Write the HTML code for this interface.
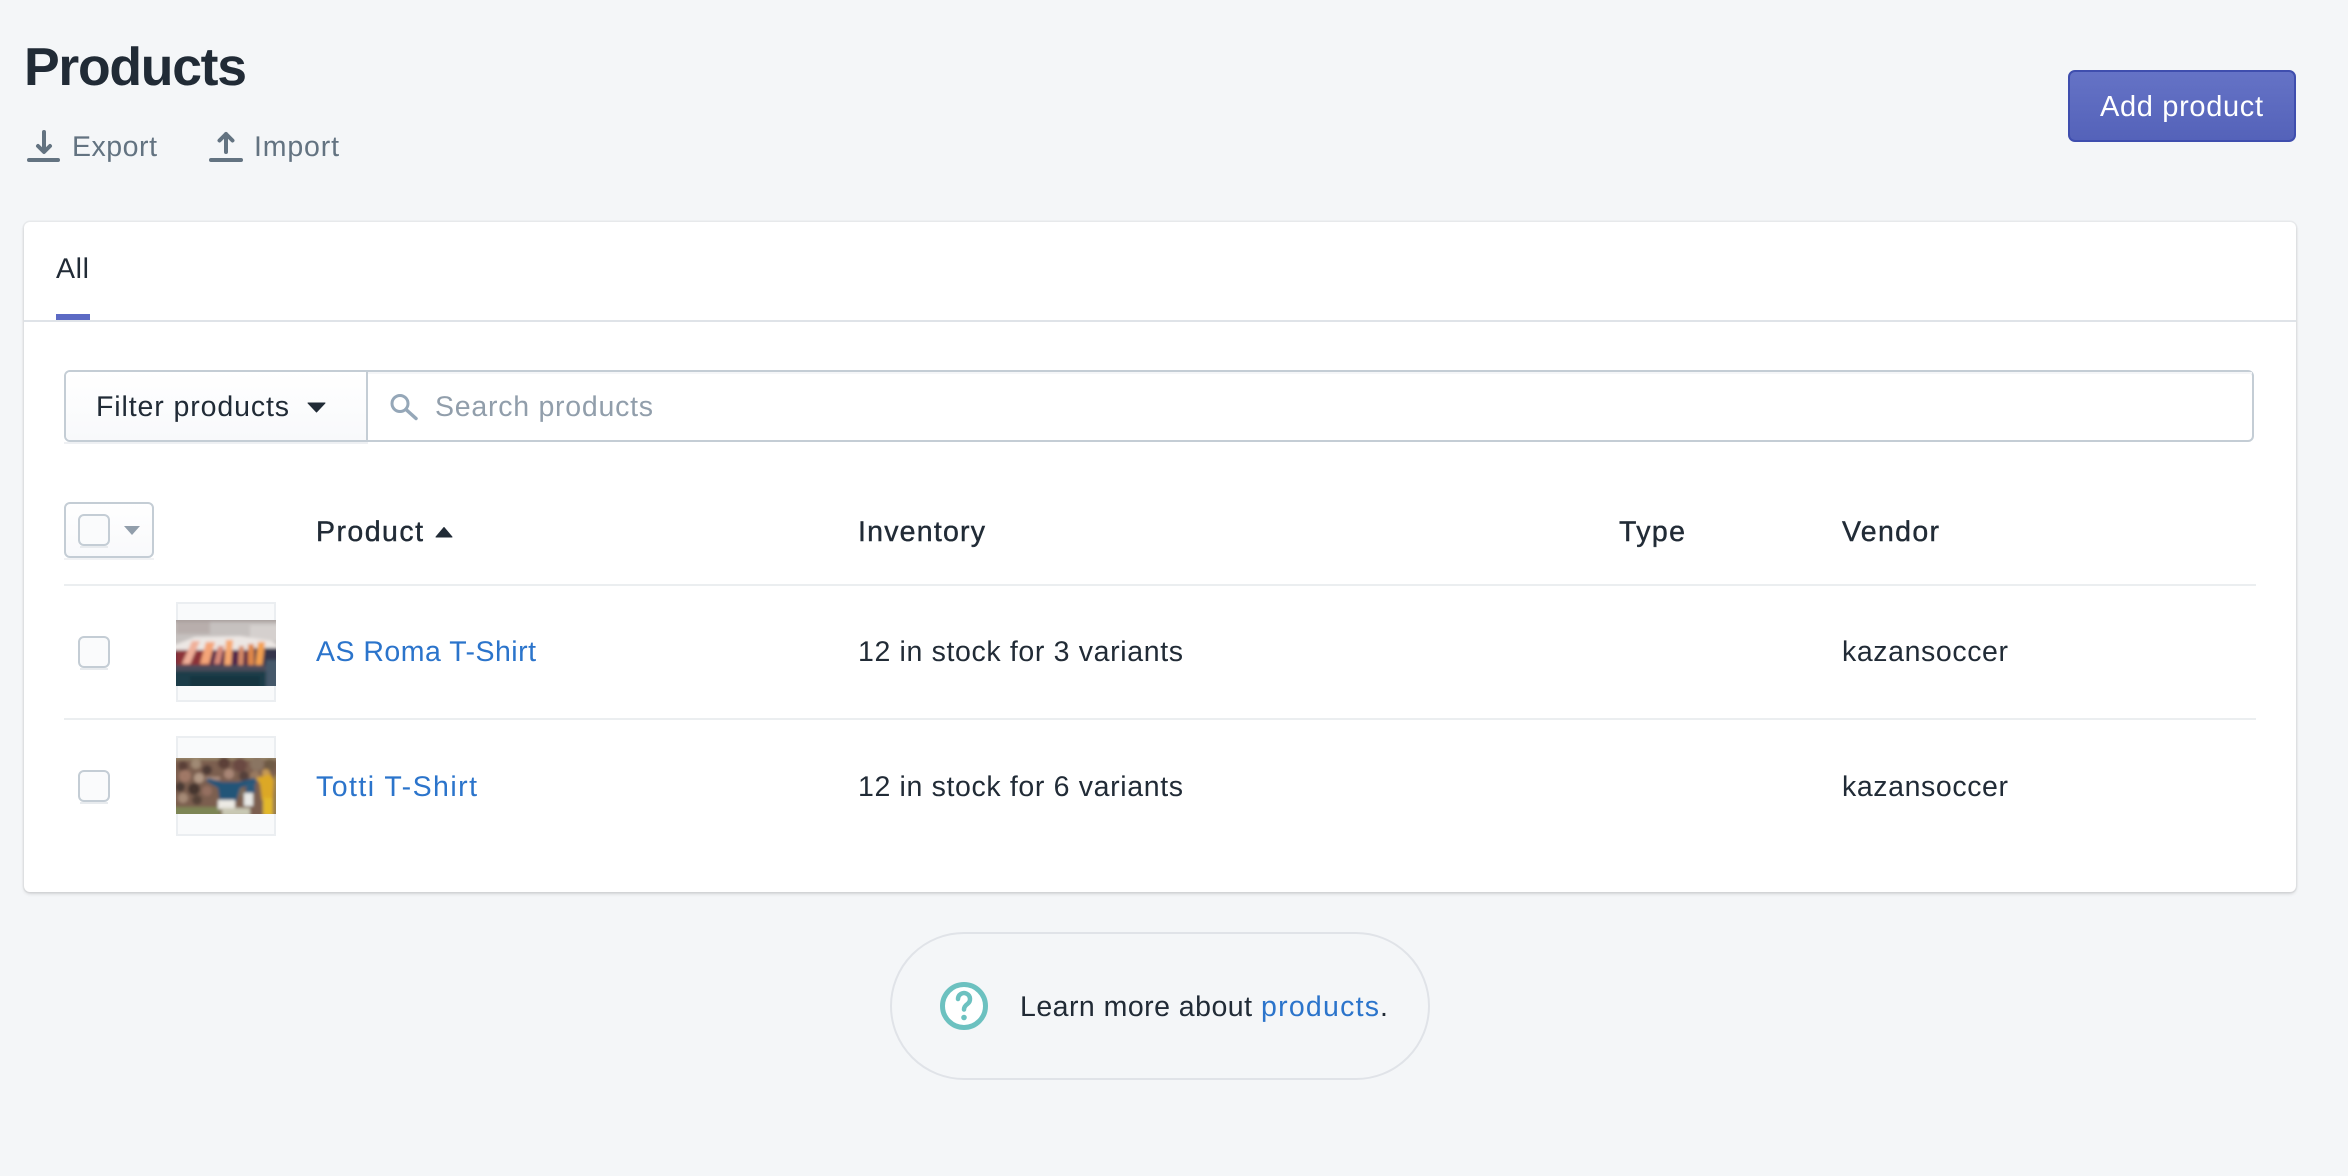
<!DOCTYPE html>
<html lang="en"><head><meta charset="utf-8"><title>Products</title>
<style>
html,body{margin:0;padding:0;width:2348px;height:1176px;overflow:hidden;background:#f4f6f8}
.card{position:absolute;left:24px;top:222px;width:2272px;height:670px;background:#fff;border-radius:6px;box-shadow:0 0 0 1.5px rgba(63,63,68,.06),0 2px 3px rgba(63,63,68,.16)}
svg{position:absolute;left:0;top:0}
text{font-family:"Liberation Sans",sans-serif;font-size:28.5px;fill:#212b36;text-rendering:geometricPrecision}
</style></head>
<body>
<div class="card"></div>
<svg width="2348" height="1176" viewBox="0 0 2348 1176" xmlns="http://www.w3.org/2000/svg">
<defs>
<linearGradient id="b" x1="0" y1="0" x2="0" y2="1"><stop offset="0" stop-color="#6573c6"/><stop offset="1" stop-color="#5462b9"/></linearGradient>
<linearGradient id="f" x1="0" y1="0" x2="0" y2="1"><stop offset="0" stop-color="#fff"/><stop offset="1" stop-color="#f8f9fb"/></linearGradient>
<filter id="bl1" x="-5%" y="-5%" width="110%" height="110%"><feGaussianBlur stdDeviation="1.6"/></filter>
<filter id="bl2" x="-5%" y="-5%" width="110%" height="110%"><feGaussianBlur stdDeviation="1.7"/></filter>
<clipPath id="c1"><rect x="176" y="620" width="100" height="66"/></clipPath>
<clipPath id="c2"><rect x="176" y="758" width="100" height="56"/></clipPath>
</defs>

<!-- header -->
<text x="24" y="85" textLength="223" lengthAdjust="spacing" style="font-size:53.5px;font-weight:700">Products</text>
<g fill="none" stroke="#637381" stroke-width="4" stroke-linecap="round" stroke-linejoin="round">
<path d="M44 132V151M38 146l6 6 6-6"/><path d="M29 160H58"/>
<path d="M226 152V134M219.500 140.500l6.500-6.500 6.500 6.500"/><path d="M211 160H241"/>
</g>
<text x="72" y="156" textLength="85" lengthAdjust="spacing" style="fill:#637381">Export</text>
<text x="254" y="156" textLength="85" lengthAdjust="spacing" style="fill:#637381">Import</text>

<!-- button -->
<rect x="2069" y="71" width="226" height="70" rx="6" fill="url(#b)" stroke="#3f4eae" stroke-width="2"/>
<text x="2100" y="116" textLength="163" lengthAdjust="spacing" style="fill:#fff;font-size:29px">Add product</text>

<!-- tabs -->
<text x="56" y="278" textLength="33" lengthAdjust="spacing">All</text>
<rect x="56" y="314" width="34" height="6" fill="#5c6ac4"/>
<rect x="24" y="320" width="2272" height="2" fill="#dfe3e8"/>

<!-- filter + search -->
<rect x="64" y="442" width="304" height="2" fill="#eef0f3"/>
<rect x="65" y="371" width="2188" height="70" rx="5" fill="#fff" stroke="#c4cdd5" stroke-width="2"/>
<path d="M70 372H366V440H70a4 4 0 0 1-4-4V376a4 4 0 0 1 4-4z" fill="url(#f)"/>
<rect x="366" y="371" width="2" height="70" fill="#c4cdd5"/>
<rect x="368" y="372" width="1884" height="2" fill="#f5f6f8"/>
<text x="96" y="416" textLength="193" lengthAdjust="spacing">Filter products</text>
<path d="M308 403H325L316.500 412Z" fill="#212b36" stroke="#212b36" stroke-width="1" stroke-linejoin="round"/>
<circle cx="400" cy="403.500" r="8" fill="none" stroke="#95a7b8" stroke-width="3"/>
<path d="M406 409.500L416 418.500" stroke="#95a7b8" stroke-width="3.500" stroke-linecap="round"/>
<text x="435" y="416" textLength="218" lengthAdjust="spacing" style="fill:#919eab">Search products</text>

<!-- table head -->
<rect x="65" y="503" width="88" height="54" rx="5" fill="url(#f)" stroke="#c4cdd5" stroke-width="2"/>
<rect x="64" y="558" width="90" height="2" fill="#f1f2f4"/>
<rect x="79" y="515" width="30" height="30" rx="5" fill="#fafbfc" stroke="#c4cdd5" stroke-width="2"/>
<rect x="80" y="546" width="28" height="2" fill="#e8ebee"/>
<path d="M124 526H140L132 535Z" fill="#919eab"/>
<text x="316" y="541" textLength="107" lengthAdjust="spacing" style="stroke:#212b36;stroke-width:.4">Product</text>
<path d="M436 537H452L444 527.500Z" fill="#212b36" stroke="#212b36" stroke-width="1" stroke-linejoin="round"/>
<text x="858" y="541" textLength="127" lengthAdjust="spacing" style="stroke:#212b36;stroke-width:.4">Inventory</text>
<text x="1619" y="541" textLength="66" lengthAdjust="spacing" style="stroke:#212b36;stroke-width:.4">Type</text>
<text x="1842" y="541" textLength="97" lengthAdjust="spacing" style="stroke:#212b36;stroke-width:.4">Vendor</text>
<rect x="64" y="584" width="2192" height="2" fill="#ebeef0"/>
<rect x="64" y="718" width="2192" height="2" fill="#ebeef0"/>

<!-- row 1 -->
<rect x="79" y="637" width="30" height="30" rx="5" fill="#fafbfc" stroke="#c4cdd5" stroke-width="2"/>
<rect x="80" y="668" width="28" height="2" fill="#e8ebee"/>
<rect x="177" y="603" width="98" height="98" fill="#f9fafb" stroke="#ebeef1" stroke-width="2"/>
<g clip-path="url(#c1)"><g filter="url(#bl1)">
<rect x="170" y="612" width="112" height="38" fill="#c6c1bf"/>
<rect x="170" y="612" width="112" height="10" fill="#a99f9d"/>
<rect x="176" y="622" width="34" height="12" fill="#b8aeac"/>
<rect x="250" y="625" width="30" height="16" fill="#d5d0ce"/>
<path d="M172 646L195 637 240 636 272 641 280 648 170 654Z" fill="#ece7e4"/>
<rect x="170" y="650" width="112" height="20" fill="#5a2c44"/>
<rect x="176" y="650" width="34" height="16" fill="#8c3038"/>
<rect x="248" y="648" width="34" height="22" fill="#35364c"/>
<rect x="212" y="650" width="30" height="16" fill="#4e2448"/>
<path d="M192 641L200 641 190 664 182 664Z" fill="#f0b09a"/>
<path d="M206 642L215 642 209 664 200 664Z" fill="#f4a478"/>
<path d="M218 646L224 646 220 664 214 664Z" fill="#d88a78"/>
<path d="M226 640L233 640 231 668 224 668Z" fill="#f6a870"/>
<path d="M239 646L244 646 243 668 238 668Z" fill="#d88c68"/>
<path d="M248 644L254 644 254 670 248 670Z" fill="#e08848"/>
<path d="M258 642L265 642 262 668 255 668Z" fill="#f4a050"/>
<rect x="170" y="665" width="112" height="7" fill="#4c4c5a"/>
<rect x="170" y="671" width="112" height="20" fill="#1e3d48"/>
<rect x="190" y="676" width="70" height="12" fill="#193540"/>
<rect x="266" y="660" width="16" height="30" fill="#44586a"/>
</g></g>

<text x="316" y="661" textLength="220" lengthAdjust="spacing" style="fill:#2b74cb">AS Roma T-Shirt</text>
<text x="858" y="661" textLength="325" lengthAdjust="spacing">12 in stock for 3 variants</text>
<text x="1842" y="661" textLength="166" lengthAdjust="spacing">kazansoccer</text>

<!-- row 2 -->
<rect x="79" y="771" width="30" height="30" rx="5" fill="#fafbfc" stroke="#c4cdd5" stroke-width="2"/>
<rect x="80" y="802" width="28" height="2" fill="#e8ebee"/>
<rect x="177" y="737" width="98" height="98" fill="#f9fafb" stroke="#ebeef1" stroke-width="2"/>
<g clip-path="url(#c2)"><g filter="url(#bl2)">
<rect x="170" y="752" width="112" height="66" fill="#7c5f50"/>
<rect x="170" y="752" width="112" height="8" fill="#978468"/>
<circle cx="183" cy="766" r="5" fill="#5a3f38"/>
<circle cx="196" cy="764" r="5" fill="#a08a74"/>
<circle cx="207" cy="770" r="5" fill="#4e3a36"/>
<circle cx="185" cy="776" r="6" fill="#a07866"/>
<circle cx="199" cy="778" r="5" fill="#b39a86"/>
<circle cx="180" cy="787" r="5" fill="#4a3a34"/>
<circle cx="194" cy="789" r="6" fill="#44362f"/>
<circle cx="207" cy="791" r="5" fill="#957060"/>
<circle cx="183" cy="798" r="5" fill="#a58a76"/>
<circle cx="197" cy="800" r="5" fill="#544238"/>
<rect x="170" y="807" width="50" height="10" fill="#7d8554"/>
<circle cx="224" cy="763" r="6" fill="#5c4038"/>
<circle cx="240" cy="765" r="7" fill="#6a4a42"/>
<circle cx="257" cy="764" r="7" fill="#8a7462"/>
<circle cx="244" cy="776" r="5" fill="#54403a"/>
<circle cx="255" cy="776" r="5" fill="#9a7a60"/>
<circle cx="270" cy="765" r="6" fill="#6e5a44"/>
<circle cx="240" cy="792" r="5" fill="#7a6a5a"/>
<rect x="206" y="777" width="14" height="3" fill="#b09080"/>
<circle cx="229" cy="774" r="5" fill="#a98676"/>
<path d="M208 778L222 782 238 782 254 778 258 782 240 788 236 802 220 802 218 788 206 781Z" fill="#245578"/>
<rect x="246" y="782" width="9" height="11" fill="#2a5a7c"/>
<rect x="218" y="800" width="17" height="9" fill="#eceae4"/>
<rect x="244" y="793" width="9" height="13" fill="#e8e9e6"/>
<rect x="222" y="808" width="28" height="8" fill="#c9c8b4"/>
<circle cx="266" cy="773" r="4" fill="#c69a54"/>
<path d="M256 778L270 774 274 780 273 800 262 800 260 784Z" fill="#dca828"/>
<rect x="263" y="798" width="10" height="18" fill="#e2b82c"/>
<rect x="275" y="775" width="6" height="40" fill="#a08a50"/>
</g></g>

<text x="316" y="796" textLength="161" lengthAdjust="spacing" style="fill:#2b74cb">Totti T-Shirt</text>
<text x="858" y="796" textLength="325" lengthAdjust="spacing">12 in stock for 6 variants</text>
<text x="1842" y="796" textLength="166" lengthAdjust="spacing">kazansoccer</text>

<!-- footer help -->
<rect x="891" y="933" width="538" height="146" rx="73" fill="none" stroke="#e0e3e8" stroke-width="2"/>
<circle cx="964" cy="1006" r="21.500" fill="#fff" stroke="#6cc1c0" stroke-width="5"/>
<path d="M958 999a6 6 0 1 1 9.500 4.900c-2.300 1.600-3.500 3-3.500 5.600" fill="none" stroke="#6cc1c0" stroke-width="4.500" stroke-linecap="round"/>
<circle cx="964" cy="1017.500" r="2.800" fill="#6cc1c0"/>
<text x="1020" y="1016" textLength="232" lengthAdjust="spacing">Learn more about</text>
<text x="1261" y="1016" textLength="118" lengthAdjust="spacing" style="fill:#2b74cb">products</text>
<text x="1380" y="1016">.</text>
</svg>
</body></html>
